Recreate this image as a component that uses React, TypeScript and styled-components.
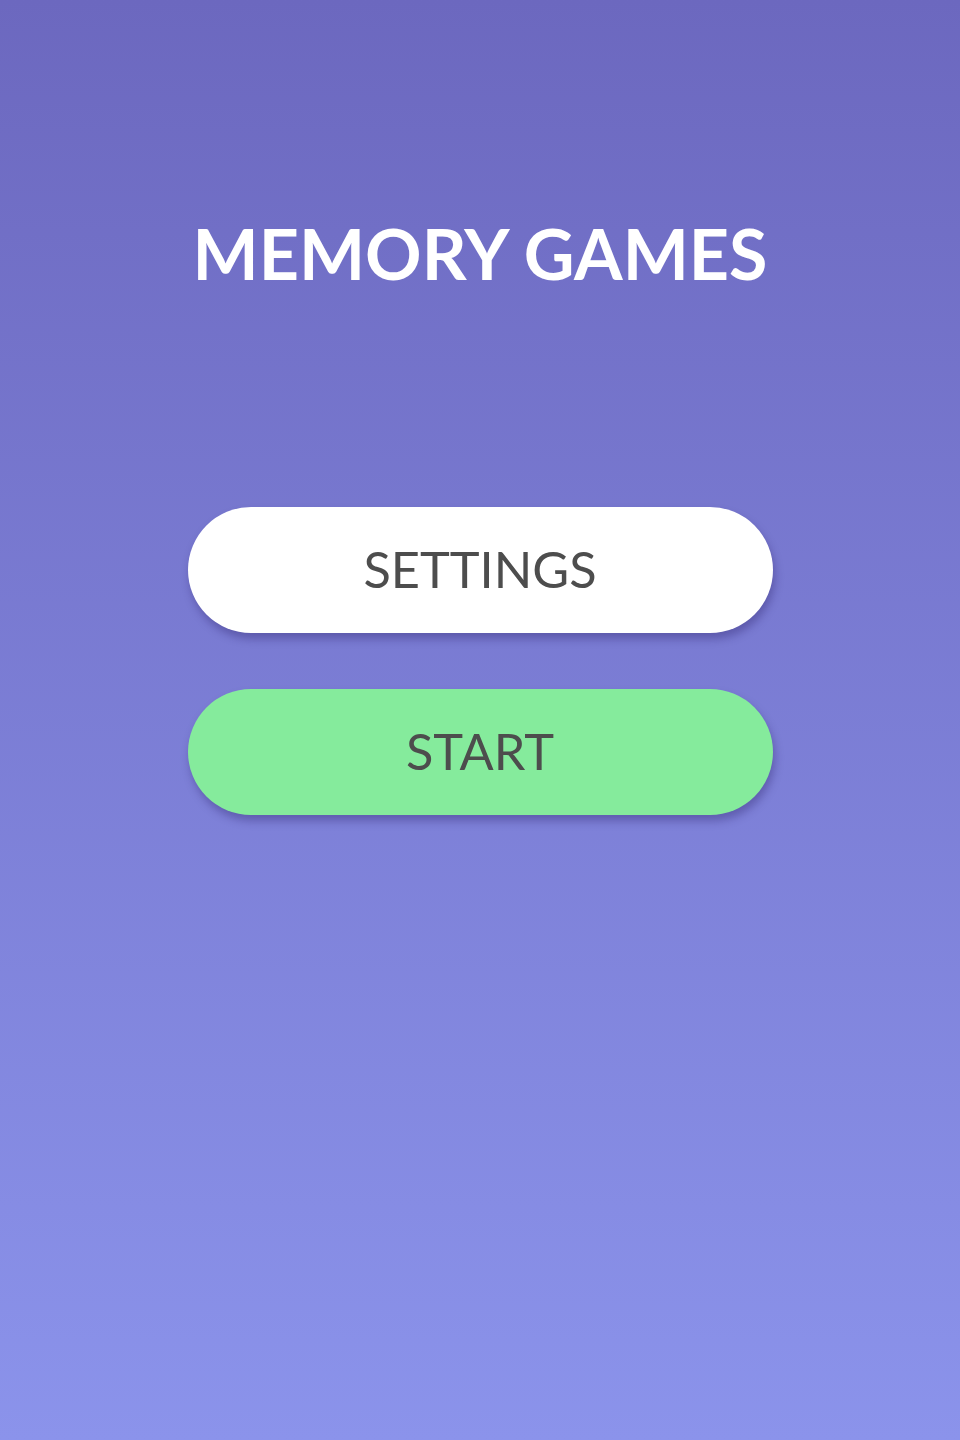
import React from "react";
import styled, { createGlobalStyle } from "styled-components";

const Global = createGlobalStyle`
  html, body { margin: 0; padding: 0; }
  body { font-family: Lato, "Liberation Sans", sans-serif; }
`;

const Screen = styled.div`
  width: 960px;
  height: 1440px;
  box-sizing: border-box;
  background: linear-gradient(180deg, #6c68bf 0%, #8b93eb 100%);
  display: flex;
  flex-direction: column;
  align-items: center;
  padding-top: 208px;
`;

const Title = styled.h1`
  margin: 0;
  font-family: Lato, "Liberation Sans", sans-serif;
  font-weight: 700;
  font-size: 70px;
  line-height: 90px;
  color: #ffffff;
  letter-spacing: 0;
`;

const Menu = styled.div`
  display: flex;
  flex-direction: column;
  gap: 56px;
  margin-top: 209px;
`;

const MenuButton = styled.button<{ $bg: string }>`
  width: 585px;
  height: 126px;
  border: none;
  border-radius: 63px;
  background: ${(p) => p.$bg};
  box-shadow: 2px 6px 8px rgba(40, 30, 100, 0.35);
  font-family: Lato, "Liberation Sans", sans-serif;
  font-weight: 400;
  font-size: 50.5px;
  color: #4d4d4d;
  display: flex;
  align-items: center;
  justify-content: center;
  padding: 0 0 4px 0;
  cursor: pointer;
`;

export default function App() {
  return (
    <>
      <Global />
      <Screen>
        <Title>MEMORY GAMES</Title>
        <Menu>
          <MenuButton $bg="#ffffff">SETTINGS</MenuButton>
          <MenuButton $bg="#85eb9c">START</MenuButton>
        </Menu>
      </Screen>
    </>
  );
}
